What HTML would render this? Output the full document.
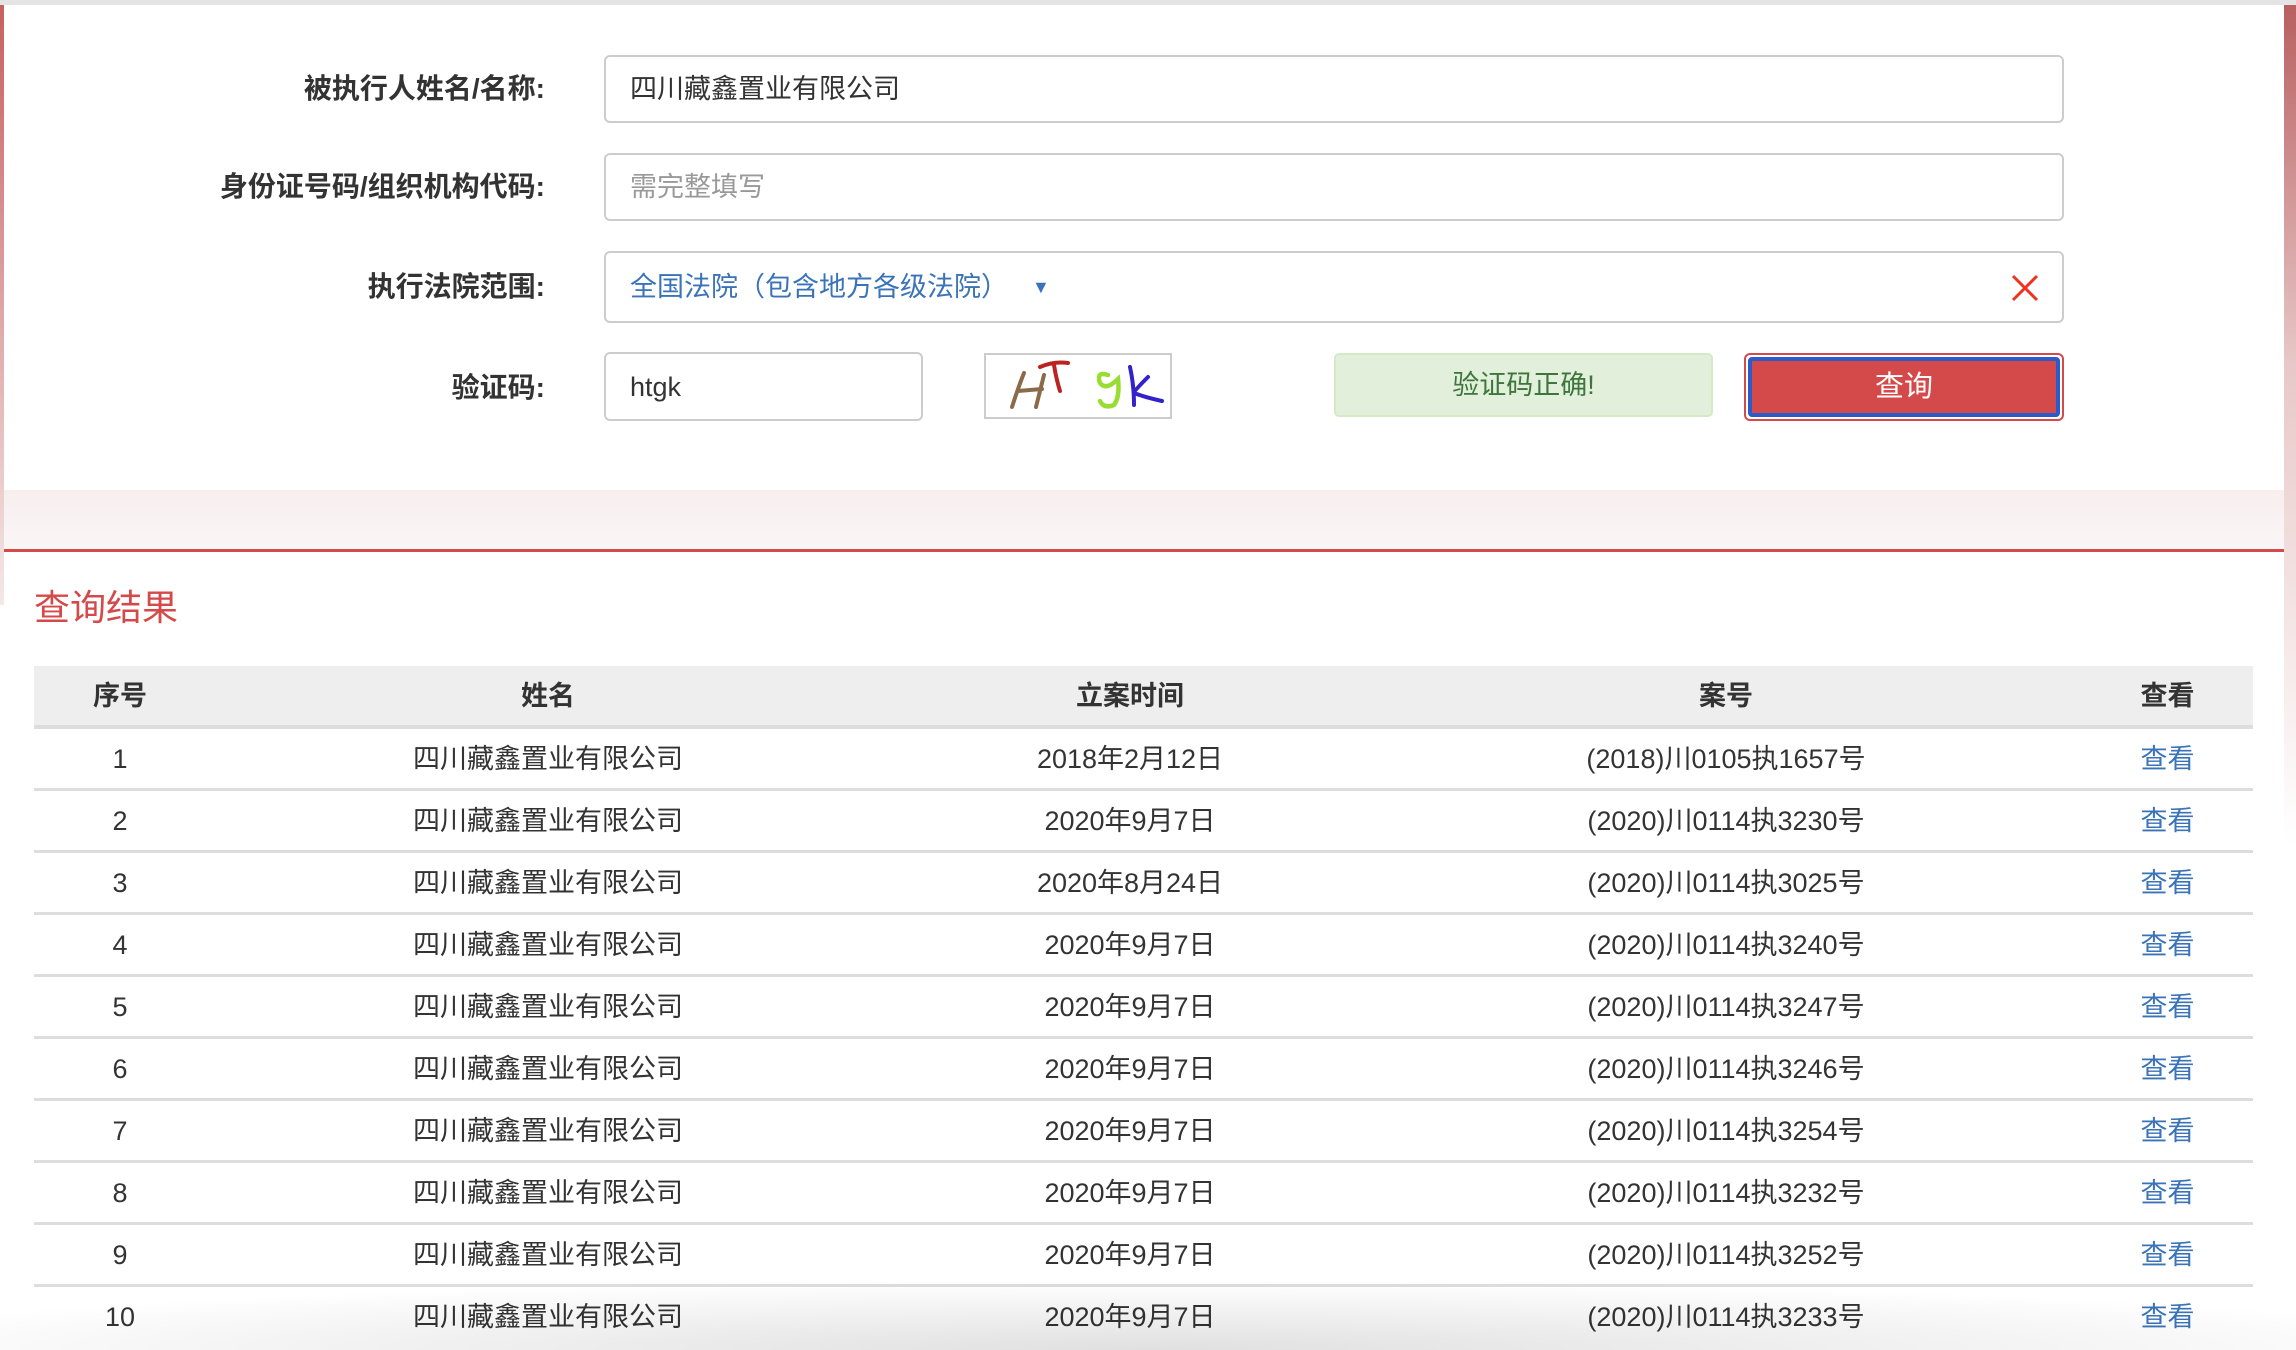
<!DOCTYPE html>
<html><head><meta charset="utf-8">
<style>
*{margin:0;padding:0;box-sizing:border-box}
body{width:2296px;height:1350px;overflow:hidden;background:#fff;font-family:"Liberation Sans","Noto Sans CJK SC",sans-serif;position:relative;color:#333}
.abs{position:absolute}
.lbl{position:absolute;right:1751px;font-size:28px;font-weight:bold;color:#333;white-space:nowrap;line-height:30px}
.inp{position:absolute;border:2px solid #ccc;border-radius:6px;background:#fff;font-size:27px;line-height:30px;padding-left:24px;display:flex;align-items:center}
.row{position:absolute;left:34px;width:2219px;height:62px;border-bottom:3px solid #ddd;font-size:27px}
.c{position:absolute;top:0;height:60px;line-height:60px;text-align:center;white-space:nowrap}
.c1{left:0;width:172px}.c2{left:172px;width:684px}.c3{left:856px;width:480px}.c4{left:1336px;width:712px}.c5{left:2048px;width:171px}
.lk{color:#3a73b8}
</style></head><body>
<div class="abs" style="left:0;top:0;width:2296px;height:5px;background:#e4e4e4"></div>
<div class="abs" style="left:0;top:5px;width:4px;height:600px;background:linear-gradient(#c86060,#f4e8e8)"></div>
<div class="abs" style="left:2284px;top:5px;width:12px;height:1200px;background:linear-gradient(#b86060,#e8c8c8 30%,#fff 70%)"></div>
<div class="abs" style="left:4px;top:490px;width:2280px;height:60px;background:linear-gradient(#f8eeee,#faf6f6)"></div>
<div class="abs" style="left:4px;top:549px;width:2280px;height:3px;background:#d44a4a"></div>

<div class="lbl" style="top:74px">被执行人姓名/名称:</div>
<div class="inp" style="left:604px;top:55px;width:1460px;height:68px">四川藏鑫置业有限公司</div>
<div class="lbl" style="top:172px">身份证号码/组织机构代码:</div>
<div class="inp" style="left:604px;top:153px;width:1460px;height:68px;color:#999">需完整填写</div>
<div class="lbl" style="top:272px">执行法院范围:</div>
<div class="inp" style="left:604px;top:251px;width:1460px;height:72px;color:#3a73b8">全国法院（包含地方各级法院）<span style="font-size:18px;margin-left:24px">▼</span>
<svg class="abs" style="right:22px;top:20px" width="30" height="30" viewBox="0 0 30 30"><path d="M3 3L27 27M27 3L3 27" stroke="#e32" stroke-width="3"/></svg></div>
<div class="lbl" style="top:373px">验证码:</div>
<div class="inp" style="left:604px;top:352px;width:319px;height:69px">htgk</div>
<svg class="abs" style="left:984px;top:353px" width="188" height="66" viewBox="0 0 188 66">
<rect x="1" y="1" width="186" height="64" fill="#fff" stroke="#ccc" stroke-width="2"/>
<path d="M28 54 Q34 35 40 20 M34 38 L58 36 M52 54 Q56 38 60 22" stroke="#8b6a4a" stroke-width="4" fill="none" stroke-linecap="round"/>
<path d="M56 14 Q70 8 84 10 M70 12 Q72 25 76 38" stroke="#b22" stroke-width="4" fill="none" stroke-linecap="round"/>
<path d="M124 22 Q112 18 116 30 Q122 38 134 26 Q136 44 130 52 Q120 56 116 48" stroke="#9d3" stroke-width="4.5" fill="none" stroke-linecap="round"/>
<path d="M146 14 Q150 32 150 52 M164 24 Q150 38 150 40 Q160 44 178 48" stroke="#3322cc" stroke-width="4" fill="none" stroke-linecap="round"/>
</svg>
<div class="abs" style="left:1334px;top:353px;width:379px;height:64px;background:#e2efda;border:2px solid #d6e9c6;border-radius:5px;color:#3c763d;font-size:27px;text-align:center;line-height:60px">验证码正确!</div>
<div class="abs" style="left:1744px;top:353px;width:320px;height:68px;border:2px solid #d44a4a;border-radius:6px;padding:2px;background:#fff">
<div style="width:100%;height:100%;background:#d44a4a;border:4px solid #2b5bc8;border-radius:4px;color:#fff;font-size:29px;text-align:center;line-height:52px">查询</div></div>

<div class="abs" style="left:34px;top:585px;font-size:36px;color:#d44a4a;line-height:46px">查询结果</div>

<div class="row" style="top:666px;height:63px;background:#eee;border-bottom:4px solid #ddd;font-weight:bold;font-size:27px">
<div class="c c1">序号</div><div class="c c2">姓名</div><div class="c c3">立案时间</div><div class="c c4">案号</div><div class="c c5">查看</div></div>

<div class="row" style="top:729px"><div class="c c1">1</div><div class="c c2">四川藏鑫置业有限公司</div><div class="c c3">2018年2月12日</div><div class="c c4">(2018)川0105执1657号</div><div class="c c5 lk">查看</div></div>
<div class="row" style="top:791px"><div class="c c1">2</div><div class="c c2">四川藏鑫置业有限公司</div><div class="c c3">2020年9月7日</div><div class="c c4">(2020)川0114执3230号</div><div class="c c5 lk">查看</div></div>
<div class="row" style="top:853px"><div class="c c1">3</div><div class="c c2">四川藏鑫置业有限公司</div><div class="c c3">2020年8月24日</div><div class="c c4">(2020)川0114执3025号</div><div class="c c5 lk">查看</div></div>
<div class="row" style="top:915px"><div class="c c1">4</div><div class="c c2">四川藏鑫置业有限公司</div><div class="c c3">2020年9月7日</div><div class="c c4">(2020)川0114执3240号</div><div class="c c5 lk">查看</div></div>
<div class="row" style="top:977px"><div class="c c1">5</div><div class="c c2">四川藏鑫置业有限公司</div><div class="c c3">2020年9月7日</div><div class="c c4">(2020)川0114执3247号</div><div class="c c5 lk">查看</div></div>
<div class="row" style="top:1039px"><div class="c c1">6</div><div class="c c2">四川藏鑫置业有限公司</div><div class="c c3">2020年9月7日</div><div class="c c4">(2020)川0114执3246号</div><div class="c c5 lk">查看</div></div>
<div class="row" style="top:1101px"><div class="c c1">7</div><div class="c c2">四川藏鑫置业有限公司</div><div class="c c3">2020年9月7日</div><div class="c c4">(2020)川0114执3254号</div><div class="c c5 lk">查看</div></div>
<div class="row" style="top:1163px"><div class="c c1">8</div><div class="c c2">四川藏鑫置业有限公司</div><div class="c c3">2020年9月7日</div><div class="c c4">(2020)川0114执3232号</div><div class="c c5 lk">查看</div></div>
<div class="row" style="top:1225px"><div class="c c1">9</div><div class="c c2">四川藏鑫置业有限公司</div><div class="c c3">2020年9月7日</div><div class="c c4">(2020)川0114执3252号</div><div class="c c5 lk">查看</div></div>
<div class="row" style="top:1287px;border-bottom:none"><div class="c c1">10</div><div class="c c2">四川藏鑫置业有限公司</div><div class="c c3">2020年9月7日</div><div class="c c4">(2020)川0114执3233号</div><div class="c c5 lk">查看</div></div>
<div class="abs" style="left:0;top:1280px;width:2296px;height:70px;background:radial-gradient(ellipse 60% 100% at 50% 100%,rgba(0,0,0,0.12),rgba(0,0,0,0) 100%);pointer-events:none"></div>
</body></html>
